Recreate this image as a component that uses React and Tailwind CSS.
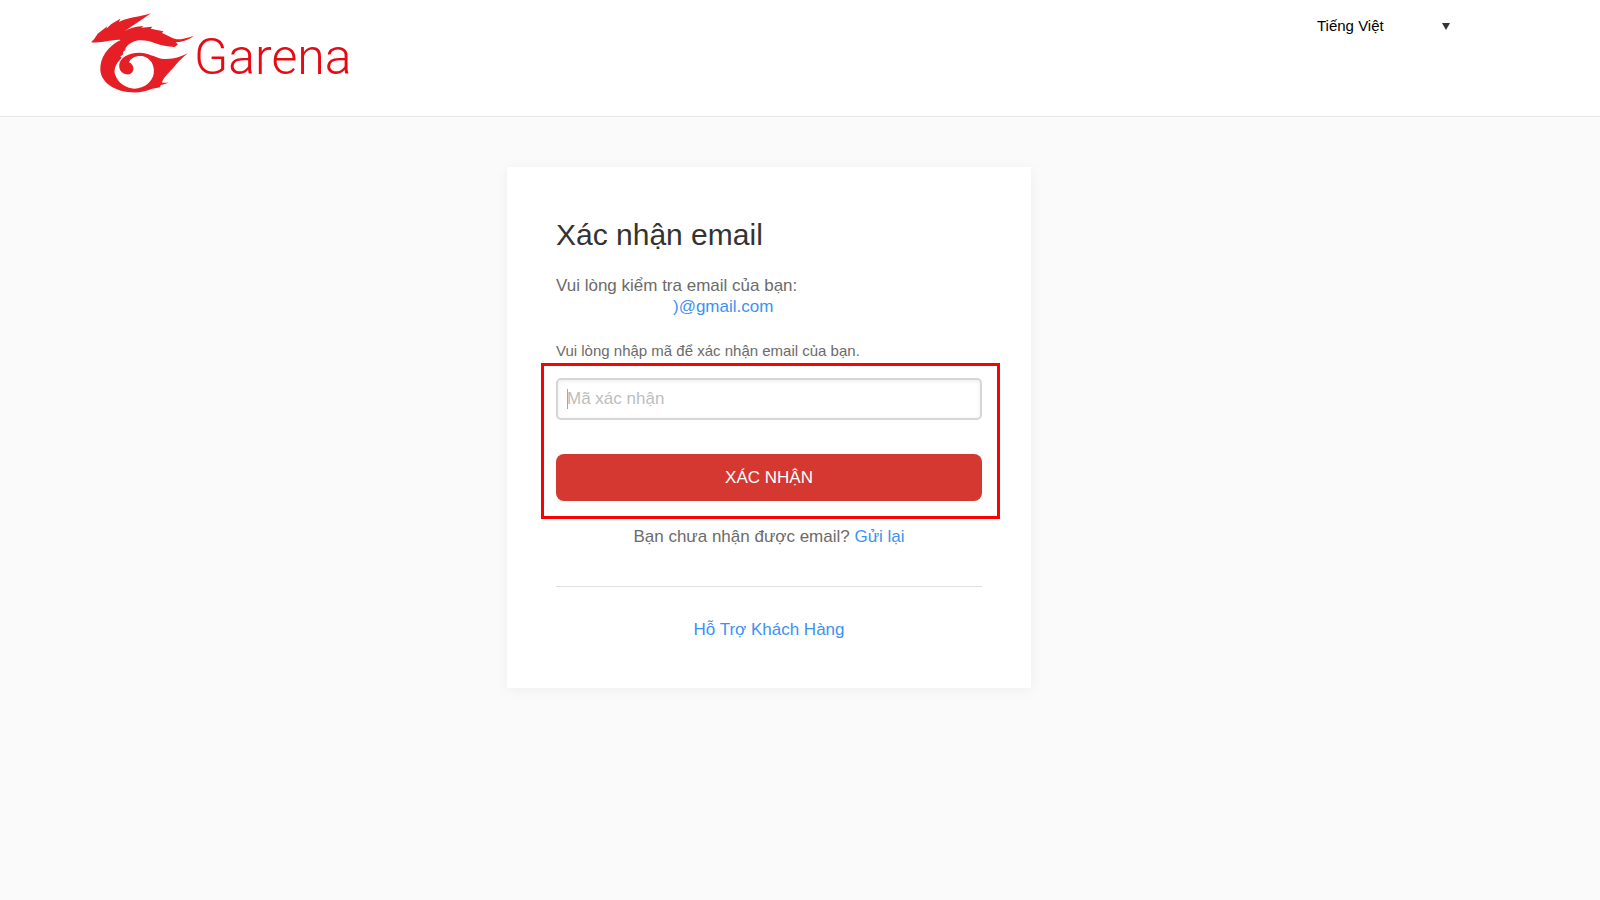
function Emblem() {
  return (
    <svg viewBox="0 0 390 330" className="h-[110px] w-[130px] shrink-0" fill="#e61e25" aria-hidden="true">
      <path d="M33 127 Q44 117 53 101 L82 79 L79 86 L94 72 L121 56 L117 66 C140 54 180 50 213 40 C190 57 160 74 134 94 C150 84 170 77 190 79 L184 83 L217 80 L212 86 L250 94 L246 99 C262 105 275 115 290 118 C308 118 325 113 341 107 C332 116 315 124 287 127 L294 133 L284 141 C262 140 244 137 226 130 C210 123 195 120 175 121 C158 124 145 132 137 143 L136 150 L129 156 L130 162 L121 170 L125 173 C108 190 99 208 106 226 C115 250 138 265 163 266 C194 265 216 246 221 222 C225 196 212 173 187 168 C168 166 151 174 147 187 C155 190 161 199 160 209 C158 220 148 225 138 223 C122 219 116 206 118 192 C123 170 148 158 178 158 C205 159 222 170 244 176 C275 180 303 171 324 159 C304 175 291 190 277 207 C262 222 248 237 246 248 L266 248 L242 256 L240 262 L214 267 C192 277 170 279 142 276 C98 270 64 246 61 211 C59 174 82 139 122 120 C99 117 69 131 33 127 Z" />
    </svg>
  );
}

export default function App() {
  return (
    <div className="flex min-h-screen flex-col bg-[#fafafa] font-['Liberation_Sans',Arial,sans-serif] text-[17px] leading-[21px] text-[#6b6b6b]">
      <header className="flex h-[117px] items-start justify-between border-b border-[#e5e5e5] bg-white pr-[150px] pl-20">
        <a href="#home" className="flex items-start text-[#e60a14]" aria-label="Garena">
          <Emblem />
          <span className="-ml-4 pt-[27px] font-['Roboto',sans-serif] text-[50px] leading-[60px] font-light">Garena</span>
        </a>
        <div className="mt-3 flex items-center text-[15px] leading-7 text-black">
          <select
            aria-label="Ngôn ngữ"
            className="h-7 w-[133px] appearance-none bg-transparent outline-none"
            defaultValue="vi"
          >
            <option value="vi">Tiếng Việt</option>
            <option value="en">English</option>
          </select>
          <svg viewBox="0 0 8 7" className="-ml-2 h-[7px] w-2" fill="#333" aria-hidden="true">
            <path d="M0 0h8L4 7z" />
          </svg>
        </div>
      </header>

      <main className="flex justify-center pt-[50px] pr-[62px]">
        <section className="w-full max-w-[524px] bg-white px-[49px] pt-12 pb-12 shadow-[0_2px_12px_rgba(0,0,0,0.05)]">
          <h1 className="text-[30px] leading-10 text-[#333]">Xác nhận email</h1>
          <p className="mt-5">Vui lòng kiểm tra email của bạn:</p>
          <p className="pl-[117px] text-[#3b92f5]">)@gmail.com</p>
          <form onSubmit={(e) => e.preventDefault()}>
            <label htmlFor="code" className="mt-6 block text-[15px] leading-5">
              Vui lòng nhập mã để xác nhận email của bạn.
            </label>
            <div className="-mr-[18px] -ml-[15px] mt-[2px] border-3 border-[#ff0000] pt-3 pr-[15px] pb-[15px] pl-3">
              <div className="relative">
                <input
                  id="code"
                  type="text"
                  placeholder="Mã xác nhận"
                  className="block h-[42px] w-full rounded-[5px] border-2 border-[#d6d6d6] px-[9px] shadow-[inset_0_1px_4px_rgba(0,0,0,0.08)] outline-none placeholder:text-[#bdbdbd]"
                />
                <span className="pointer-events-none absolute inset-y-[11px] left-[11px] w-px bg-[#a8a8a8]" aria-hidden="true" />
              </div>
              <button type="submit" className="mt-[34px] block h-[47px] w-full rounded-lg bg-[#d43831] text-white">
                XÁC NHẬN
              </button>
            </div>
          </form>
          <p className="mt-[7px] text-center">
            Bạn chưa nhận được email? <a href="#resend" className="text-[#3b92f5]">Gửi lại</a>
          </p>
          <hr className="mt-[39px] border-[#dedede]" />
          <p className="mt-8 text-center">
            <a href="#support" className="text-[#3b92f5]">Hỗ Trợ Khách Hàng</a>
          </p>
        </section>
      </main>
    </div>
  );
}
